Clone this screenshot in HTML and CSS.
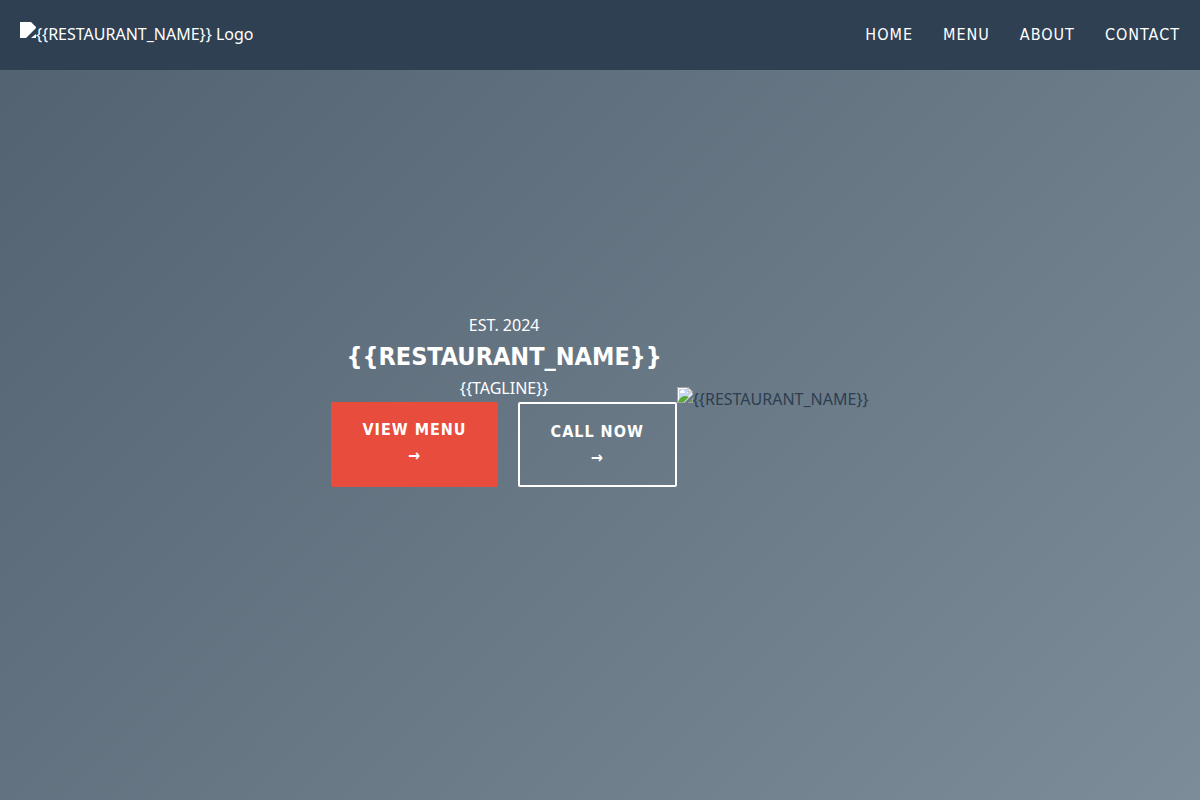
FILE: index.html
```html
<!DOCTYPE html>
<html lang="en">
<head>
<meta charset="utf-8">
<title>{{RESTAURANT_NAME}}</title>
<link rel="stylesheet" href="styles.css">
</head>
<body>
<header class="header">
  <a class="logo" href="#">
    <svg class="picture-icon" viewBox="0 0 16 16" aria-hidden="true"><path fill="#fff" d="M0 0h11l5 5v1L6 16H0zM16 12v4h-5z"/></svg>
    <span>{{RESTAURANT_NAME}} Logo</span>
  </a>
  <nav class="nav">
    <a class="nav-link" href="#home">HOME</a>
    <a class="nav-link" href="#menu">MENU</a>
    <a class="nav-link" href="#about">ABOUT</a>
    <a class="nav-link" href="#contact">CONTACT</a>
  </nav>
</header>
<main class="hero" id="home">
  <div class="hero-content">
    <p class="hero-text">EST. 2024</p>
    <h1 class="hero-title">{{RESTAURANT_NAME}}</h1>
    <p class="hero-text">{{TAGLINE}}</p>
    <div class="actions">
      <a class="button button-primary" href="#menu">VIEW MENU<span class="arrow">→</span></a>
      <a class="button button-outline" href="#contact">CALL NOW<span class="arrow">→</span></a>
    </div>
  </div>
  <div class="hero-picture">
    <svg class="picture-icon" viewBox="0 0 16 16" aria-hidden="true">
      <path fill="#fff" d="M0 0h11l5 5v2l-9 9H0z"/>
      <path fill="#c3d5f5" d="M2 2h8v4h4v1l-7 7H2z"/>
      <path fill="#fff" d="M3 5q0-1 1-1 1-2 2-1 1 0 1 1 1 0 1 1v1H3z"/>
      <path fill="#56aa35" d="M1 15q2-5 6-6 3 0 5 1l-5 5z"/>
      <path fill="none" stroke="#a2a2a2" d="M7 15.500H.5V.5H11M11 .5v4.500h4.500M11 .5l4.500 4.500v2"/>
      <path fill="#56aa35" d="M15 12v3h-3z"/>
      <path fill="none" stroke="#a2a2a2" d="M15.500 11v4.500H11"/>
    </svg>
    <span>{{RESTAURANT_NAME}}</span>
  </div>
</main>
</body>
</html>
```
FILE: styles.css
```css
* {
  box-sizing: border-box;
  margin: 0;
  padding: 0;
}

body {
  font-family: "Noto Sans", sans-serif;
  font-size: 16px;
  line-height: 1.6;
  color: #2c3e50;
}

a {
  color: inherit;
  text-decoration: none;
}

.header {
  position: fixed;
  top: 0;
  left: 0;
  right: 0;
  display: flex;
  align-items: center;
  justify-content: space-between;
  padding: 22px 20px;
  background: #2f4053;
  color: #fff;
}

.logo,
.hero-picture {
  display: flex;
  align-items: flex-start;
}

.picture-icon {
  flex: none;
  width: 16px;
  height: 16px;
}

.nav {
  display: flex;
  gap: 30px;
}

.nav-link,
.hero-title,
.button {
  font-family: "DejaVu Sans Condensed", "DejaVu Sans", sans-serif;
}

.nav-link {
  letter-spacing: 1px;
}

.hero {
  display: flex;
  align-items: center;
  justify-content: center;
  min-height: 100vh;
  background: linear-gradient(135deg, #52616f, #7d8c99);
}

.hero-content {
  display: flex;
  flex-direction: column;
  text-align: center;
  color: #fff;
}

.hero-title {
  font-size: 25px;
  line-height: 38px;
}

.actions {
  display: flex;
  gap: 20px;
}

.button {
  padding: 15px 31px;
  border-radius: 2px;
  font-weight: 700;
  letter-spacing: 1px;
}

.button-primary {
  background: #e74c3c;
}

.button-outline {
  border: 2px solid #fff;
}

.arrow {
  display: block;
}
```
